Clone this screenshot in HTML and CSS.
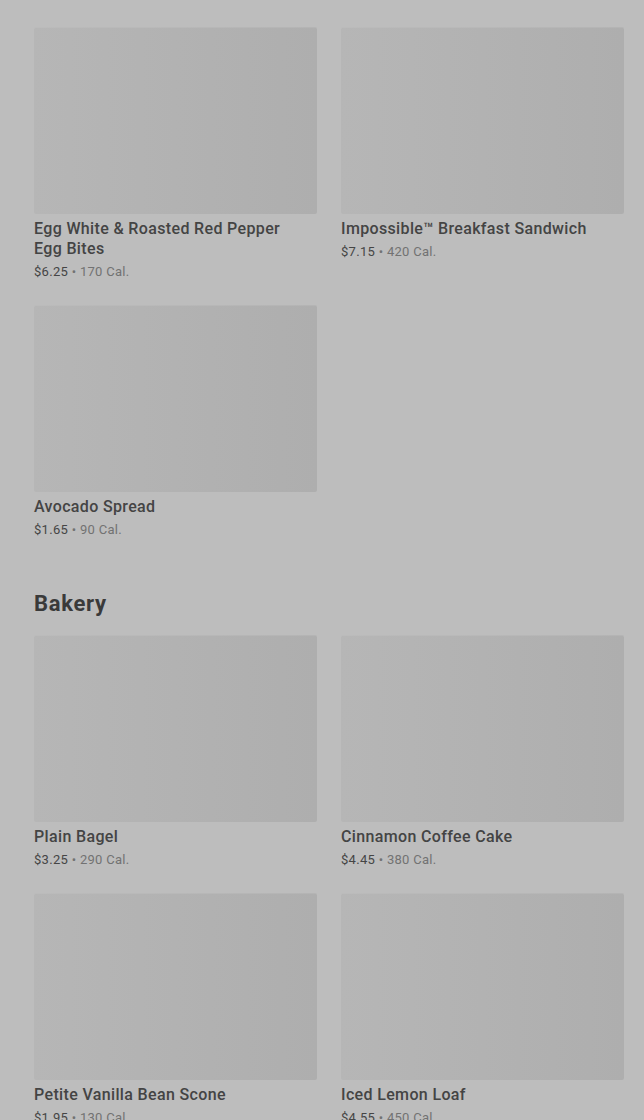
FILE: index.html
```html
<!DOCTYPE html>
<html lang="en">
<head>
  <meta charset="UTF-8" />
  <meta name="viewport" content="width=device-width, initial-scale=1.0" />
  <title>Menu</title>
  <link rel="stylesheet" href="styles.css">
</head>
<body>
  <div class="menu">
    <section class="category">
      <div class="grid">
        <div class="item">
          <div class="thumb"></div>
          <div class="name">Egg White &amp; Roasted Red Pepper Egg Bites</div>
          <div class="meta"><span class="price">$6.25</span> &bull; 170 Cal.</div>
        </div>
        <div class="item">
          <div class="thumb"></div>
          <div class="name">Impossible™ Breakfast Sandwich</div>
          <div class="meta"><span class="price">$7.15</span> &bull; 420 Cal.</div>
        </div>
        <div class="item">
          <div class="thumb"></div>
          <div class="name">Avocado Spread</div>
          <div class="meta"><span class="price">$1.65</span> &bull; 90 Cal.</div>
        </div>
      </div>
    </section>

    <section class="category">
      <h2>Bakery</h2>
      <div class="grid">
        <div class="item">
          <div class="thumb"></div>
          <div class="name">Plain Bagel</div>
          <div class="meta"><span class="price">$3.25</span> &bull; 290 Cal.</div>
        </div>
        <div class="item">
          <div class="thumb"></div>
          <div class="name">Cinnamon Coffee Cake</div>
          <div class="meta"><span class="price">$4.45</span> &bull; 380 Cal.</div>
        </div>
        <div class="item">
          <div class="thumb"></div>
          <div class="name">Petite Vanilla Bean Scone</div>
          <div class="meta"><span class="price">$1.95</span> &bull; 130 Cal.</div>
        </div>
        <div class="item">
          <div class="thumb"></div>
          <div class="name">Iced Lemon Loaf</div>
          <div class="meta"><span class="price">$4.55</span> &bull; 450 Cal.</div>
        </div>
      </div>
    </section>
  </div>
</body>
</html>
```

FILE: styles.css
```css
* {
  box-sizing: border-box;
}

body {
  margin: 0;
  padding: 0;
  background: #bdbdbd;
  font-family: Roboto, "Liberation Sans", Arial, sans-serif;
  color: #3e3e3e;
}

.menu {
  padding: 27px 20px 0 34px;
}

.category {
  padding-bottom: 51px;
}

.category h2 {
  margin: 0 0 17px;
  font-size: 22px;
  line-height: 28px;
  font-weight: 700;
  color: #3a3a3a;
  letter-spacing: 0.7px;
}

.grid {
  display: grid;
  grid-template-columns: 1fr 1fr;
  column-gap: 24px;
  row-gap: 24px;
}

.thumb {
  height: 187px;
  border-radius: 2px;
  background: linear-gradient(90deg, #b6b6b6, #aeaeae);
  box-shadow: inset 0 1px 0 rgba(255,255,255,0.08);
}

.name {
  margin-top: 5px;
  padding-right: 20px;
  font-size: 16px;
  line-height: 20px;
  font-weight: 500;
  color: #444;
  letter-spacing: 0.35px;
}

.meta {
  margin-top: 4px;
  font-size: 13px;
  line-height: 18px;
  color: #727272;
  letter-spacing: 0.3px;
}

.price {
  color: #454545;
}
```
